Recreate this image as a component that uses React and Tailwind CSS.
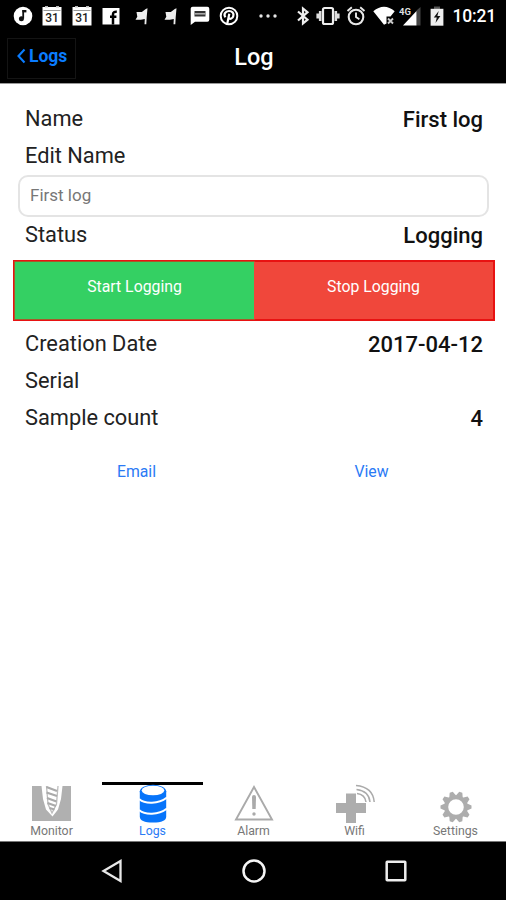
const Calendar = () => (
  <svg width="20" height="20" viewBox="0 0 20 20" className="shrink-0">
    <path d="M.5 1h19v18.500H.5z" fill="#fff" />
    <path d="M3 0h3v1.500H3zM14 0h3v1.500h-3z" fill="#bbb" />
    <path d="M1.500 4.500h17" stroke="#999" strokeWidth="1" />
    <text x="10" y="16" textAnchor="middle" fontFamily="Roboto, sans-serif" fontWeight="500" fontSize="12" fill="#222">31</text>
  </svg>
);

const Flag = () => (
  <svg width="20" height="20" viewBox="0 0 20 20" className="shrink-0">
    <path d="M5.500 6h5.300l4-3 1.700-.7-.8 9-.4 7h-1.800l.3-5.300-4 .8-5.300-.1 1.800-3z" fill="#eee" />
  </svg>
);

function StatusBar() {
  return (
    <div className="flex h-[31px] items-center pl-[12.5px] pr-2.5 text-white">
      <div className="flex items-center gap-[9.5px]">
        <svg width="20" height="20" viewBox="0 0 20 20">
          <circle cx="10" cy="10" r="9.300" fill="#fff" />
          <path d="M10.200 4v8.500" stroke="#111" strokeWidth="1.800" />
          <path d="M9.400 4h4v2.400h-4z" fill="#111" />
          <circle cx="8.400" cy="12.800" r="2.500" fill="#111" />
        </svg>
        <Calendar />
        <Calendar />
        <svg width="20" height="20" viewBox="0 0 20 20">
          <path d="M1.500 2h17v16.500h-17z" fill="#fff" />
          <path d="M12 18.500V8.200q0-2.700 3.800-2.400M9 10.800h6.400" fill="none" stroke="#000" strokeWidth="2.500" />
        </svg>
        <Flag />
        <Flag />
        <svg width="20" height="20" viewBox="0 0 20 20">
          <path d="M.7 2.500Q.7.700 2.700.700h14.600q2 0 2 2v11q0 2-2 2H5L.7 19z" fill="#fff" />
          <path d="M4.500 5h11v5.500h-11z" fill="#333" />
          <path d="M4.500 7h11v1.600h-11z" fill="#aaa" />
        </svg>
        <svg width="20" height="20" viewBox="0 0 20 20">
          <circle cx="10" cy="10" r="8.300" fill="none" stroke="#fff" strokeWidth="2" />
          <path d="M6.500 11.200C4.200 8.500 6.200 5 10 5c3.400 0 5 2.200 4.300 4.900-.6 2.800-3.300 3.700-4.600 1.900M10.300 7.800 8.300 17.500" fill="none" stroke="#fff" strokeWidth="2.200" />
        </svg>
      </div>
      <svg width="20" height="20" viewBox="0 0 20 20" className="ml-[19px]">
        <g fill="#e5e5e5"><circle cx="3" cy="10" r="1.700" /><circle cx="10" cy="10" r="1.700" /><circle cx="17" cy="10" r="1.700" /></g>
      </svg>
      <svg width="14" height="20" viewBox="0 0 14 20" className="ml-[18px]">
        <path d="m2 5.500 9.500 8.200L7 17.500v-15l4.500 3.700L2 14.500" fill="none" stroke="#eee" strokeWidth="2.200" />
      </svg>
      <svg width="24" height="20" viewBox="0 0 24 20" className="ml-[6px]">
        <rect x="7" y="2" width="10" height="16" rx="1.500" fill="none" stroke="#eee" strokeWidth="2.200" />
        <path d="M4.200 5v10M19.800 5v10M1.700 7.500v5M22.300 7.500v5" stroke="#ddd" strokeWidth="2.600" />
      </svg>
      <svg width="20" height="20" viewBox="0 0 20 20" className="ml-[6px]">
        <circle cx="10" cy="11" r="7.300" fill="none" stroke="#e8e8e8" strokeWidth="2.100" />
        <path d="m1.500 5 4.300-3.700M18.500 5l-4.300-3.700M10 6.500V11l3.400 2.200" fill="none" stroke="#e8e8e8" strokeWidth="1.900" />
      </svg>
      <svg width="22" height="20" viewBox="0 0 22 20" className="ml-[7px]">
        <path d="M.3 5.200Q5.500.700 11 .700t10.700 4.500L17.500 10.500H13.500v7L11 18.800z" fill="#fff" />
        <path d="m15 12.500 5 5m0-5-5 5" stroke="#ccc" strokeWidth="1.900" />
      </svg>
      <svg width="24" height="20" viewBox="0 0 24 20" className="ml-[4px]">
        <path d="M17.500 4.500 21.500 1v18.500h-4z" fill="#444" />
        <path d="M17.500 5v14.500H4z" fill="#fff" />
        <text x="0" y="8.500" fontFamily="Roboto, sans-serif" fontWeight="700" fontSize="9.500" fill="#ddd">4G</text>
      </svg>
      <svg width="14" height="20" viewBox="0 0 14 20" className="ml-[7px]">
        <path d="M4 .500h6V3H4z" fill="#555" />
        <path d="M.6 2.800h12.800v16.900H.6z" fill="#eee" />
        <path d="M8.700 5 3.800 11.600h3L5.500 17l4.900-6.900h-3z" fill="#111" />
      </svg>
      <span className="ml-auto text-[17.500px] font-medium leading-5 tracking-[-0.200px]">10:21</span>
    </div>
  );
}

const Row = ({ label, value }) => (
  <div className="flex h-[37px] items-center justify-between pl-[25px] pr-[23px] pt-[2px] text-[21.800px]">
    <span className="text-[#222]">{label}</span>
    <span className="text-[22px] font-medium text-[#111]">{value}</span>
  </div>
);

const MonitorIcon = () => (
  <svg width="40" height="38" viewBox="0 0 40 38">
    <path d="M0 1h9.500l1.500 13 3 10.500 6.500 7 5.500-7L29 14l1.500-13H39v35H0z" fill="#b0b0b0" />
    <path d="M14.500 1 16 19l4 9 4.500-9L26 1" fill="none" stroke="#bdbdbd" strokeWidth="1.300" />
    <path d="m14.500 2 10.500 4M14.500 7.500l10.500 3.500M15 13l9.500 3.500M15.500 18l8.500 3M17.500 23l5 1.500" stroke="#aaa" strokeWidth="2.200" />
  </svg>
);

const LogsIcon = () => (
  <svg width="28" height="40" viewBox="0 0 28 40">
    <path d="M.8 7v25.500q0 6 13.200 6t13.200-6V7z" fill="#0774fa" />
    <ellipse cx="14" cy="7.500" rx="13.200" ry="6.700" fill="#0774fa" />
    <ellipse cx="14" cy="6.500" rx="11.300" ry="4.800" fill="#fff" />
    <path d="M0 15q4 4 13 3.700T28 13.500M0 26q4 4 13 3.700T28 24.500" fill="none" stroke="#fff" strokeWidth="2" />
  </svg>
);

const AlarmIcon = () => (
  <svg width="40" height="38" viewBox="0 0 40 38">
    <path d="M20 2 38 34.500H2z" fill="none" stroke="#aaa" strokeWidth="1.900" />
    <path d="M18 12q0-2 2-2t2 2l-.3 12h-3.400z" fill="#aaa" />
    <circle cx="20" cy="29" r="1.700" fill="#aaa" />
  </svg>
);

const WifiIcon = () => (
  <svg width="40" height="40" viewBox="0 0 40 40">
    <path d="M11 9.500h10V19h10v10H21v10H11V29H1V19h10z" fill="#adadad" />
    <path d="M21 1.500Q38 3 39.200 18M21.500 5.500Q34 7 35 18M22 9.500q8 1 9 8.500" fill="none" stroke="#aaa" strokeWidth="1.500" />
  </svg>
);

const teeth = [18, 54, 90, 126, 162, 198, 234, 270, 306, 342];
const SettingsIcon = () => (
  <svg width="32" height="32" viewBox="0 0 32 32" className="mt-[5px]">
    <circle cx="16" cy="16" r="9.800" fill="none" stroke="#adadad" strokeWidth="4" />
    {teeth.map((a) => (
      <path key={a} d="M12.300 5.500 14.400.500h3.200l2.100 5z" fill="#adadad" transform={`rotate(${a} 16 16)`} />
    ))}
  </svg>
);

const tabs = [
  { name: "Monitor", Icon: MonitorIcon },
  { name: "Logs", Icon: LogsIcon, active: true },
  { name: "Alarm", Icon: AlarmIcon },
  { name: "Wifi", Icon: WifiIcon },
  { name: "Settings", Icon: SettingsIcon },
];

export default function App() {
  return (
    <div className="flex h-[900px] w-[506px] flex-col overflow-hidden bg-white font-[Roboto,sans-serif]">
      <header className="h-[84px] border-b border-[#999] bg-black">
        <StatusBar />
        <div className="grid h-[52px] grid-cols-[1fr_auto_1fr] items-center pl-[7px] pr-[5px]">
          <button className="mt-0.5 flex h-[41px] w-[69px] items-center border border-[#141414] pb-1 pl-[9px] text-[17.500px] font-bold text-[#0a7cff]">
            <svg width="9" height="16" viewBox="0 0 9 16" className="mr-[3px]">
              <path d="M7.500 1.500 1.500 8l6 6.500" fill="none" stroke="currentColor" strokeWidth="2.100" />
            </svg>
            Logs
          </button>
          <h1 className="pt-px text-[23.500px] font-medium text-white">Log</h1>
        </div>
      </header>

      <main className="flex-1 pt-4">
        <Row label="Name" value="First log" />
        <Row label="Edit Name" />
        <div className="ml-[18px] mr-[17px] mt-[1px] flex h-[42px] items-center rounded-[10px] border-2 border-[#e4e4e4] pl-[10px] text-[17px] text-[#777]">
          First log
        </div>
        <div className="-mt-px">
          <Row label="Status" value="Logging" />
        </div>
        <div className="ml-[13px] mr-[11px] mt-[7px] grid h-[61px] grid-cols-2 border-2 border-[#e81212] text-center text-[15.800px] text-white">
          <button className="-m-px border border-[#a8582a] bg-[#34d063] pb-[8px]">Start Logging</button>
          <button className="bg-[#f0473b] pb-[8px]">Stop Logging</button>
        </div>
        <div className="mt-1">
          <Row label="Creation Date" value="2017-04-12" />
          <Row label="Serial" />
          <Row label="Sample count" value="4" />
        </div>
        <div className="mt-6 grid grid-cols-2 pl-[19px] pr-[17px] text-center text-[15.800px] leading-6 text-[#2a7af5]">
          <span>Email</span>
          <span>View</span>
        </div>
      </main>

      <nav className="grid h-[60px] grid-cols-5 border-b border-[#777] pl-px">
        {tabs.map(({ name, Icon, active }) => (
          <div
            key={name}
            className={
              active
                ? "flex flex-col items-center border-t-[3px] border-black text-[#2a7af5]"
                : "flex flex-col items-center border-t-[3px] border-transparent text-[#777]"
            }
          >
            <div className="-mt-px flex h-[40px] items-center justify-center">
              <Icon />
            </div>
            <span className="text-[12.300px] leading-[15px]">{name}</span>
          </div>
        ))}
      </nav>

      <footer className="flex h-[58px] items-center justify-between bg-black pl-[101px] pr-[99px]">
        <svg width="22" height="26" viewBox="0 0 22 26">
          <path d="M19.500 3v20L2.500 13z" fill="none" stroke="#e8e8e8" strokeWidth="2.300" />
        </svg>
        <svg width="26" height="26" viewBox="0 0 26 26">
          <circle cx="13" cy="13" r="10.500" fill="none" stroke="#f5f5f5" strokeWidth="2.500" />
        </svg>
        <svg width="22" height="26" viewBox="0 0 22 26">
          <rect x="1.700" y="3.700" width="18.600" height="18.600" rx=".5" fill="none" stroke="#eee" strokeWidth="2.500" />
        </svg>
      </footer>
    </div>
  );
}
